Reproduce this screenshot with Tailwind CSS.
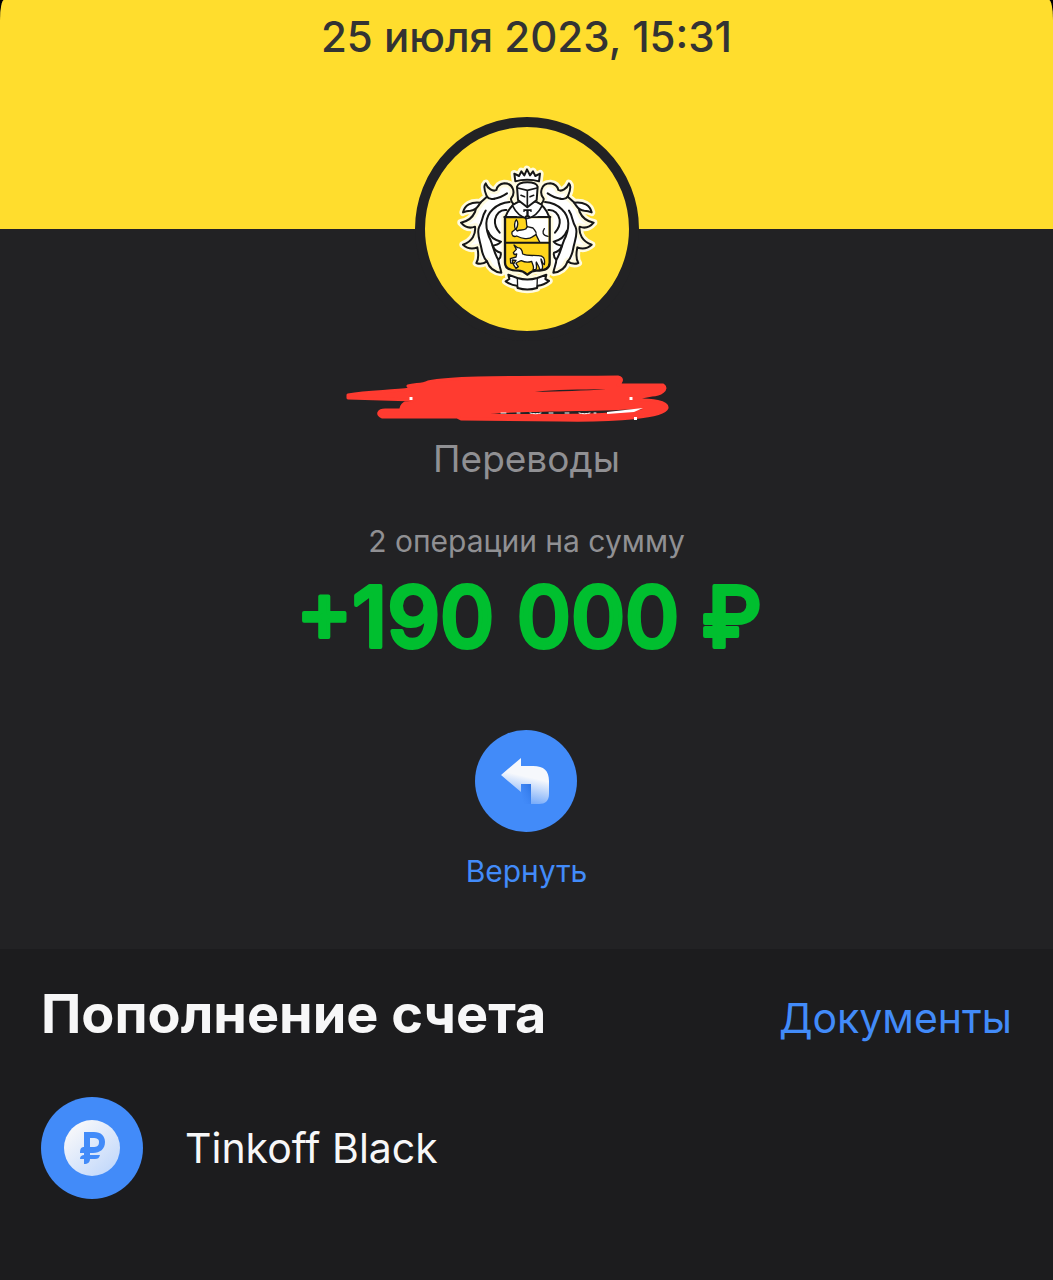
<!DOCTYPE html>
<html lang="ru">
<head>
<meta charset="utf-8">
<meta name="viewport" content="width=device-width, initial-scale=1">
<title>Пополнение счета</title>
<script src="https://cdn.jsdelivr.net/npm/@tailwindcss/browser@4"></script>
</head>
<body class="bg-black font-['Inter',sans-serif]">
<div class="flex min-h-screen flex-col overflow-hidden rounded-t-[4px_20px] bg-[#1c1c1e]">
  <header class="flex h-[229px] justify-center bg-[#ffdd2d] pt-[7px]">
    <time datetime="2023-07-25T15:31" class="text-[42px] leading-[60px] font-medium text-[#333333]">25 июля 2023, 15:31</time>
  </header>

  <main class="flex grow flex-col">
    <section class="flex flex-col items-center bg-[#222224] pb-[55px]">
      <div class="-mt-[112px] flex size-[224px] items-center justify-center rounded-full border-10 border-[#222224] bg-[#ffdd2d]">
        <svg viewBox="0 0 480 438" class="h-[146px] w-[160px]" role="img" aria-label="Тинькофф" fill="none" stroke-linejoin="round" stroke-linecap="round">
          <defs>
            <path id="wing-fill" d="M206 150L192 128C206 112 200 82 172 82C158 84 150 92 148 102C138 108 122 98 116 82C106 92 116 112 120 122C100 140 88 146 84 168C76 186 62 196 42 200C54 214 69 218 84 212C87 234 76 256 48 266C61 278 76 280 91 274C95 294 94 312 88 321C99 326 110 323 120 316C127 336 143 348 163 350L176 340V182Z"/>
            <path id="leaf" d="M48 169C53 148 72 136 101 140C92 150 90 163 70 164C60 164 54 166 48 169Z"/>
            <g id="wing">
              <path d="M206 152C202 144 190 140 192 128C206 112 200 82 172 82C158 84 150 92 148 102C138 108 122 98 116 82C106 92 116 112 120 122C100 140 88 146 84 168C76 186 62 196 42 200C54 214 69 218 84 212C87 234 76 256 48 266C61 278 76 280 91 274C95 294 94 312 88 321C99 326 110 323 120 316C127 336 143 348 163 350C160 334 154 322 154 311C160 306 163 300 161 290C150 288 141 280 137 269C147 268 156 264 162 257C140 252 128 240 122 224"/>
              <path d="M188 138C146 142 119 170 118 202C118 226 124 240 131 253C140 275 144 298 154 311"/>
              <path d="M120 122C124 128 134 130 142 128M116 164C105 180 107 196 96 214C88 232 100 258 103 276C106 294 112 308 120 316"/>
              <path d="M180 112C168 120 156 126 142 128M178 162C160 160 147 174 144 191C142 207 150 221 158 230"/>
            </g>
            <path id="crown" d="M205 76L202 53L216 60L223 46L232 58L240 40L249 58L258 46L265 60L279 53L276 76C256 70 225 70 205 76Z"/>
            <path id="helmet" d="M210 92C215 74 267 74 272 92L269 132L241 154L213 132Z"/>
            <path id="collar" d="M176 181C184 160 196 146 211 139L241 156L271 139C286 146 300 160 308 181Z"/>
            <path id="shield" d="M174 183H308V320C308 338 294 344 268 344C254 344 248 350 241 356C234 350 228 344 214 344C188 344 174 338 174 320Z"/>
            <path id="ribbon" d="M184 356L211 366C231 372 251 372 271 366L298 356L295 369L306 375C295 384 284 388 272 389L270 396C251 402 231 402 212 396L210 389C197 388 187 384 176 376L187 369Z"/>
          </defs>
          <g fill="#fff" stroke="#fffbe0" stroke-width="22">
            <use href="#wing-fill"/><use href="#leaf"/>
            <g transform="translate(482 0) scale(-1 1)"><use href="#wing-fill"/><use href="#leaf"/></g>
            <use href="#crown"/><use href="#helmet"/><use href="#shield"/><use href="#ribbon"/>
          </g>
          <g fill="#fff" stroke="#161616" stroke-width="6">
            <use href="#wing" fill="none"/><use href="#leaf"/>
            <g transform="translate(482 0) scale(-1 1)"><use href="#wing" fill="none"/><use href="#leaf"/></g>
            <use href="#crown"/>
            <use href="#ribbon"/>
            <path d="M211 366L212 396M271 366L270 396" stroke-width="4"/>
            <use href="#shield" fill="#ffd51c" stroke-width="7"/>
          </g>
          <path d="M235 187C242 194 235 202 241 212L257 216L267 236L278 258H304V187Z" fill="#fff"/>
          <g stroke="#161616" stroke-width="4">
            <path d="M208 191C201 197 202 213 205 220L195 228C192 239 201 244 209 240C224 248 245 252 257 242L267 236C270 226 263 224 258 216L241 212L236 219C226 224 219 220 211 225L207 220C214 209 214 196 208 191Z" fill="#fff"/>
            <path d="M235 187C242 194 235 202 241 212M267 236L278 258M292 218C285 228 286 238 303 241"/>
            <path d="M176 260H306" stroke-width="6"/>
            <path d="M201 267L212 275C220 275 226 283 227 294C243 301 259 297 272 299C289 298 295 307 292 326C285 324 286 313 282 309C282 321 291 329 285 340H277C279 333 271 326 268 318C266 327 272 335 266 341H258C263 332 255 322 254 316C243 320 231 318 223 314C216 317 209 317 207 323L214 332L207 337L199 325L207 313L196 312L198 322L191 321L190 308L207 303L209 294L202 296L199 290L208 280Z" fill="#fff"/>
          </g>
          <g stroke="#161616" stroke-width="6">
            <use href="#collar" fill="#fff" stroke="none"/>
            <path d="M176 181C184 160 196 146 211 139M306 181C298 160 286 146 271 139M172 183H208M274 183H310"/>
            <path d="M196 148C206 168 221 184 241 187C261 184 276 168 286 148L268 138H214Z" fill="#fff" stroke-width="5"/>
            <use href="#helmet" fill="#fff"/>
            <path d="M212 96L241 103L270 96M241 103V152" stroke-width="5"/>
            <path d="M222 118L233 122M249 122L260 118" stroke-width="5"/>
          </g>
          <path d="M229 160H254V168H251L249 165H245V178L249 180V183H234V180L238 178V165H234L232 168H229Z" fill="#161616"/>
        </svg>
      </div>

      <h1 class="mt-[30px] -ml-[44px] flex" aria-label="Имя скрыто">
        <svg viewBox="0 0 330 52" class="h-[52px] w-[330px]" aria-hidden="true" stroke-linecap="round" stroke-linejoin="round">
          <path d="M8 24C30 20 50 21 70 18L68 15C75 13 82 14 88 11C120 5 190 7 278 6C284 7 281 12 278 14L323 14C329 18 320 24 312 24L286 29C315 28 328 31 327 37C324 46 278 50 220 49L121 48L117 46L42 46C36 43 39 39 45 39H61C61 31 69 31 75 29L8 27Z" fill="#ff3b30" stroke="#ff3b30" stroke-width="3"/>
          <path d="M195 21C215 18 240 19 266 18C245 20 220 20 195 21M150 43C185 40 239 41 303 38C272 44 204 43 150 43" fill="#222224"/>
          <path d="M71 26V29M291 26V29" stroke="#fff" stroke-width="3" stroke-linecap="butt"/>
          <path d="M161 42H166M177 42H180M190 42C193 43 198 43 201 42M209 42H213M225 42H229M239 42C242 43 247 43 250 42M254 42H256" stroke="#fff" stroke-width="1" fill="none"/>
          <path d="M267 41L303 37L294 41L267 43ZM294 46H297V49H294Z" fill="#fff"/>
        </svg>
      </h1>
      <p class="mt-[10px] text-[37px] leading-[52px] text-[#909093]">Переводы</p>
      <p class="mt-9 text-[30px] leading-10 text-[#909093]">2 операции на сумму</p>
      <svg viewBox="0 0 500 110" class="h-[110px] w-[500px]" role="img" aria-label="+190 000 ₽">
        <text x="252" y="86" text-anchor="middle" fill="#00bf2f" stroke="#00bf2f" stroke-width="4" stroke-linejoin="round" class="text-[84px] font-medium">+190 000 ₽</text>
      </svg>
      <button type="button" class="mt-[59px] flex flex-col items-center gap-4 text-[30px] leading-[46px] text-[#428bf9]">
        <svg viewBox="0 0 102 102" class="size-[102px]" aria-hidden="true">
          <defs>
            <linearGradient id="fade" gradientUnits="userSpaceOnUse" x1="66" y1="50" x2="60" y2="76">
              <stop offset="0" stop-color="#f6f8fc"/><stop offset="1" stop-color="#f6f8fc" stop-opacity=".25"/>
            </linearGradient>
            <linearGradient id="shade" x1="1" y1="0" x2="0" y2="1">
              <stop offset="0" stop-color="#2c73e4"/><stop offset="1" stop-color="#428bf9" stop-opacity="0"/>
            </linearGradient>
          </defs>
          <circle cx="51" cy="51" r="51" fill="#428bf9"/>
          <path d="M46 54H56V74H48Z" fill="url(#shade)"/>
          <path d="M26 45L46 28V36H58C69 36 74 41 74 51V64C74 71 70 74 64 74H56V54H46V62Z" fill="url(#fade)"/>
        </svg>
        <span>Вернуть</span>
      </button>
    </section>

    <section class="px-[41px] pt-[31px]">
      <div class="flex items-center justify-between">
        <h2 class="text-[54px] leading-[60px] font-bold text-[#f7f7f8]">Пополнение счета</h2>
        <a href="#documents" class="pt-2 text-[41px] leading-[60px] text-[#428bf9]">Документы</a>
      </div>
      <div class="mt-[49px] flex items-center gap-[42px]">
        <svg viewBox="0 0 102 102" class="size-[102px]" aria-hidden="true">
          <defs>
            <linearGradient id="coin" x1=".15" y1=".1" x2=".85" y2=".9">
              <stop offset="0" stop-color="#f8f8fa"/><stop offset="1" stop-color="#c3d9fb"/>
            </linearGradient>
          </defs>
          <circle cx="51" cy="51" r="51" fill="#428bf9"/>
          <circle cx="51" cy="51" r="28" fill="url(#coin)"/>
          <path fill="#428bf9" fill-rule="evenodd" d="M43 35H53C60 35 64 39 64 45C64 52 59 56 52 56H49V58H59C58 61 57 62 54 62H49C49 65 47 67 43 67V62H39C39 59 41 58 43 58V56H39C39 52 40 50 43 50ZM49 41V50H52C56 50 58 49 58 45C58 42 56 41 52 41Z"/>
        </svg>
        <p class="text-[41px] leading-[60px] text-[#f7f7f8]">Tinkoff Black</p>
      </div>
    </section>
  </main>
</div>
</body>
</html>
